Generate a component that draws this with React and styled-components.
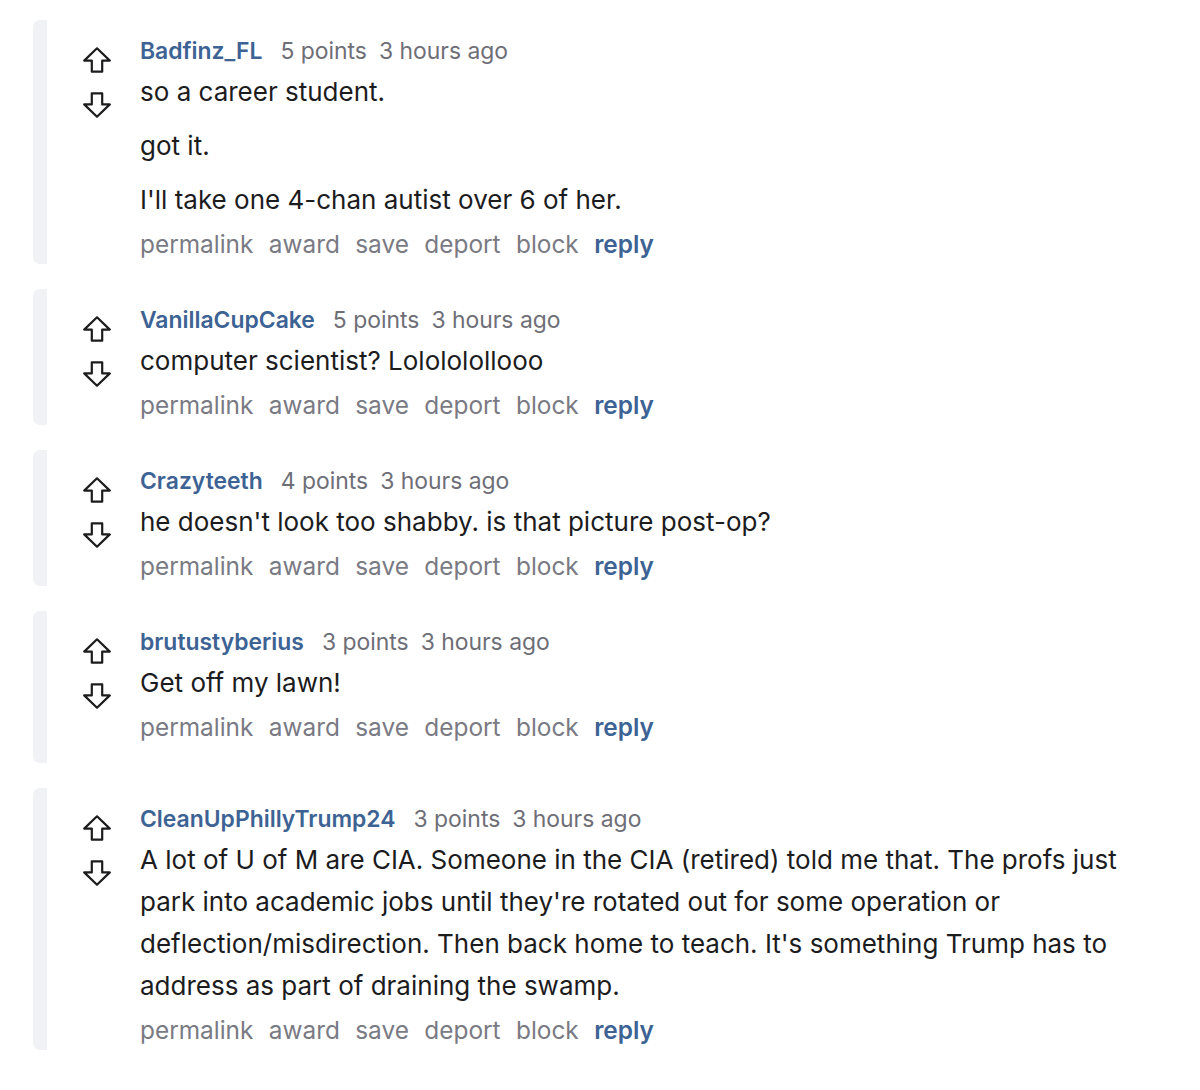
import React from "react";
import styled, { createGlobalStyle } from "styled-components";

const GlobalStyle = createGlobalStyle`
  body {
    margin: 0;
    background: #ffffff;
    font-family: Inter, Roboto, "Liberation Sans", Arial, sans-serif;
    color: #1c1c1e;
  }
`;

const Page = styled.div`
  width: 1200px;
  box-sizing: border-box;
  padding: 20px 50px 0 33px;
  display: flex;
  flex-direction: column;
  gap: 25px;
`;

const Comment = styled.div`
  display: flex;
  padding: 10px 0 ${(p) => p.$extra || 0}px 0;
`;

const Bar = styled.div`
  width: 14px;
  flex-shrink: 0;
  margin: -10px 0 ${(p) => -(p.$extra || 0)}px 0;
  background: #f0f2f5;
  border-radius: 7px 0 0 7px;
`;

const Votes = styled.div`
  width: 28px;
  flex-shrink: 0;
  margin: 0 29px 0 36px;
  padding-top: 17px;
  display: flex;
  flex-direction: column;
  gap: 19px;
`;

const Body = styled.div`
  flex: 1;
  min-width: 0;
`;

const Header = styled.div`
  display: flex;
  align-items: center;
  height: 41px;
  font-size: 22.9px;
  color: #6e6e77;
  gap: 12px;
`;

const User = styled.span`
  color: #3d6294;
  font-weight: 600;
  margin-right: 6px;
`;

const Text = styled.p`
  margin: 0 0 12px 0;
  font-size: 26px;
  line-height: 42px;
  color: #1c1c1e;
  &:last-of-type {
    margin-bottom: 0;
  }
`;

const Actions = styled.div`
  display: flex;
  align-items: center;
  height: 40px;
  margin-top: 3px;
  gap: 15.4px;
  font-size: 24.4px;
`;

const Action = styled.span`
  color: ${(p) => (p.$primary ? "#3d6294" : "#7a7a84")};
  font-weight: ${(p) => (p.$primary ? 600 : 400)};
`;

const Arrow = ({ down }) => (
  <svg
    width="28"
    height="26"
    viewBox="0 0 28 26"
    style={down ? { transform: "scaleY(-1)" } : undefined}
  >
    <path
      d="M14 1.3 L26.8 13.6 L19.2 13.6 L19.2 24.7 L8.8 24.7 L8.8 13.6 L1.2 13.6 Z"
      fill="none"
      stroke="#1c1c1e"
      strokeWidth="2.2"
      strokeLinejoin="round"
    />
  </svg>
);

const comments = [
  {
    user: "Badfinz_FL",
    points: "5 points",
    paras: [
      "so a career student.",
      "got it.",
      "I'll take one 4-chan autist over 6 of her.",
    ],
  },
  {
    user: "VanillaCupCake",
    points: "5 points",
    paras: ["computer scientist? Lolololollooo"],
  },
  {
    user: "Crazyteeth",
    points: "4 points",
    paras: ["he doesn't look too shabby. is that picture post-op?"],
  },
  {
    user: "brutustyberius",
    points: "3 points",
    paras: ["Get off my lawn!"],
    extra: 16,
  },
  {
    user: "CleanUpPhillyTrump24",
    points: "3 points",
    paras: [
      "A lot of U of M are CIA. Someone in the CIA (retired) told me that. The profs just park into academic jobs until they're rotated out for some operation or deflection/misdirection. Then back home to teach. It's something Trump has to address as part of draining the swamp.",
    ],
  },
];

const actions = ["permalink", "award", "save", "deport", "block"];

export default function App() {
  return (
    <>
      <GlobalStyle />
      <Page>
        {comments.map((c) => (
          <Comment key={c.user} $extra={c.extra}>
            <Bar $extra={c.extra} />
            <Votes>
              <Arrow />
              <Arrow down />
            </Votes>
            <Body>
              <Header>
                <User>{c.user}</User>
                <span>{c.points}</span>
                <span>3 hours ago</span>
              </Header>
              {c.paras.map((p, i) => (
                <Text key={i}>{p}</Text>
              ))}
              <Actions>
                {actions.map((a) => (
                  <Action key={a}>{a}</Action>
                ))}
                <Action $primary>reply</Action>
              </Actions>
            </Body>
          </Comment>
        ))}
      </Page>
    </>
  );
}
